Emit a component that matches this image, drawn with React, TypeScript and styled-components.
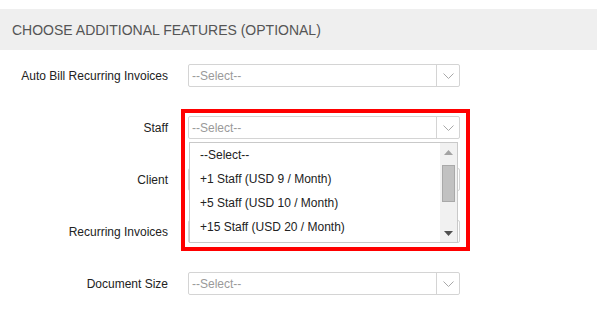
import React from 'react';
import styled, { createGlobalStyle } from 'styled-components';

const GlobalStyle = createGlobalStyle`
  body {
    margin: 0;
    background: #fff;
    font-family: "Liberation Sans", Arial, sans-serif;
  }
`;

const fields = ['Auto Bill Recurring Invoices', 'Staff', 'Client', 'Recurring Invoices', 'Document Size'];

const staffOptions = [
  '--Select--',
  '+1 Staff (USD 9 / Month)',
  '+5 Staff (USD 10 / Month)',
  '+15 Staff (USD 20 / Month)',
];

const Chevron = () => (
  <svg width="11" height="6" viewBox="0 0 11 6">
    <path d="M0.5 0.5 L5.5 5.5 L10.5 0.5" fill="none" stroke="#a8a8a8" strokeWidth="1" />
  </svg>
);

const SelectBox: React.FC = () => (
  <SSelect>
    <span className="value">--Select--</span>
    <span className="arrow">
      <Chevron />
    </span>
  </SSelect>
);

const StaffDropdown: React.FC = () => (
  <SDropdown>
    <ul>
      {staffOptions.map((opt) => (
        <li key={opt}>{opt}</li>
      ))}
    </ul>
    <div className="scrollbar">
      <svg width="9" height="5" viewBox="0 0 9 5" className="up">
        <path d="M0 5 L4.5 0 L9 5 Z" fill="#a3a3a3" />
      </svg>
      <div className="thumb" />
      <svg width="9" height="5" viewBox="0 0 9 5" className="down">
        <path d="M0 0 L4.5 5 L9 0 Z" fill="#505050" />
      </svg>
    </div>
  </SDropdown>
);

const App: React.FC = () => {
  return (
    <>
      <GlobalStyle />
      <SPage>
        <SHeader>CHOOSE ADDITIONAL FEATURES (OPTIONAL)</SHeader>
        <SForm>
          {fields.map((label) => (
            <SRow key={label}>
              <SLabel>{label}</SLabel>
              <SField>
                <SelectBox />
                {label === 'Staff' && (
                  <>
                    <StaffDropdown />
                    <SHighlight />
                  </>
                )}
              </SField>
            </SRow>
          ))}
        </SForm>
      </SPage>
    </>
  );
};

export default App;

const SPage = styled.div`
  width: 597px;
  padding-top: 9px;
`;

const SHeader = styled.div`
  height: 41px;
  display: flex;
  align-items: center;
  padding-left: 12px;
  background: #efefef;
  color: #555;
  font-size: 14px;
`;

const SForm = styled.div`
  display: flex;
  flex-direction: column;
  gap: 29px;
  padding-top: 14px;
`;

const SRow = styled.div`
  display: grid;
  grid-template-columns: 168px 272px;
  column-gap: 20px;
  align-items: center;
`;

const SLabel = styled.label`
  text-align: right;
  font-size: 12px;
  color: #222;
`;

const SField = styled.div`
  position: relative;
`;

const SSelect = styled.div`
  box-sizing: border-box;
  height: 23px;
  display: flex;
  border: 1px solid #d4d4d4;
  border-radius: 2px;
  background: #fff;
  .value {
    flex: 1;
    display: flex;
    align-items: center;
    padding-left: 3px;
    font-size: 12px;
    color: #9a9a9a;
  }
  .arrow {
    width: 22px;
    display: flex;
    align-items: center;
    justify-content: center;
    border-left: 1px solid #d4d4d4;
  }
`;

const SDropdown = styled.div`
  position: absolute;
  top: 26px;
  left: 1px;
  width: 269px;
  height: 101px;
  box-sizing: border-box;
  border: 1px solid #c9c9c9;
  background: #fff;
  display: flex;
  z-index: 2;
  ul {
    flex: 1;
    margin: 0;
    padding: 0;
    list-style: none;
  }
  li {
    height: 24px;
    line-height: 24px;
    padding-left: 10px;
    font-size: 12px;
    color: #222;
  }
  .scrollbar {
    width: 17px;
    background: #f1f1f1;
    display: flex;
    flex-direction: column;
    align-items: center;
  }
  .up {
    margin-top: 7px;
  }
  .thumb {
    box-sizing: border-box;
    width: 13px;
    height: 37px;
    margin-top: 10px;
    background: #c1c1c1;
    border: 1px solid #a9a9a9;
  }
  .down {
    margin-top: auto;
    margin-bottom: 6px;
  }
`;

const SHighlight = styled.div`
  position: absolute;
  top: -7px;
  left: -7px;
  width: 289px;
  height: 142px;
  box-sizing: border-box;
  border: 4px solid #ff0000;
  pointer-events: none;
  z-index: 3;
`;
